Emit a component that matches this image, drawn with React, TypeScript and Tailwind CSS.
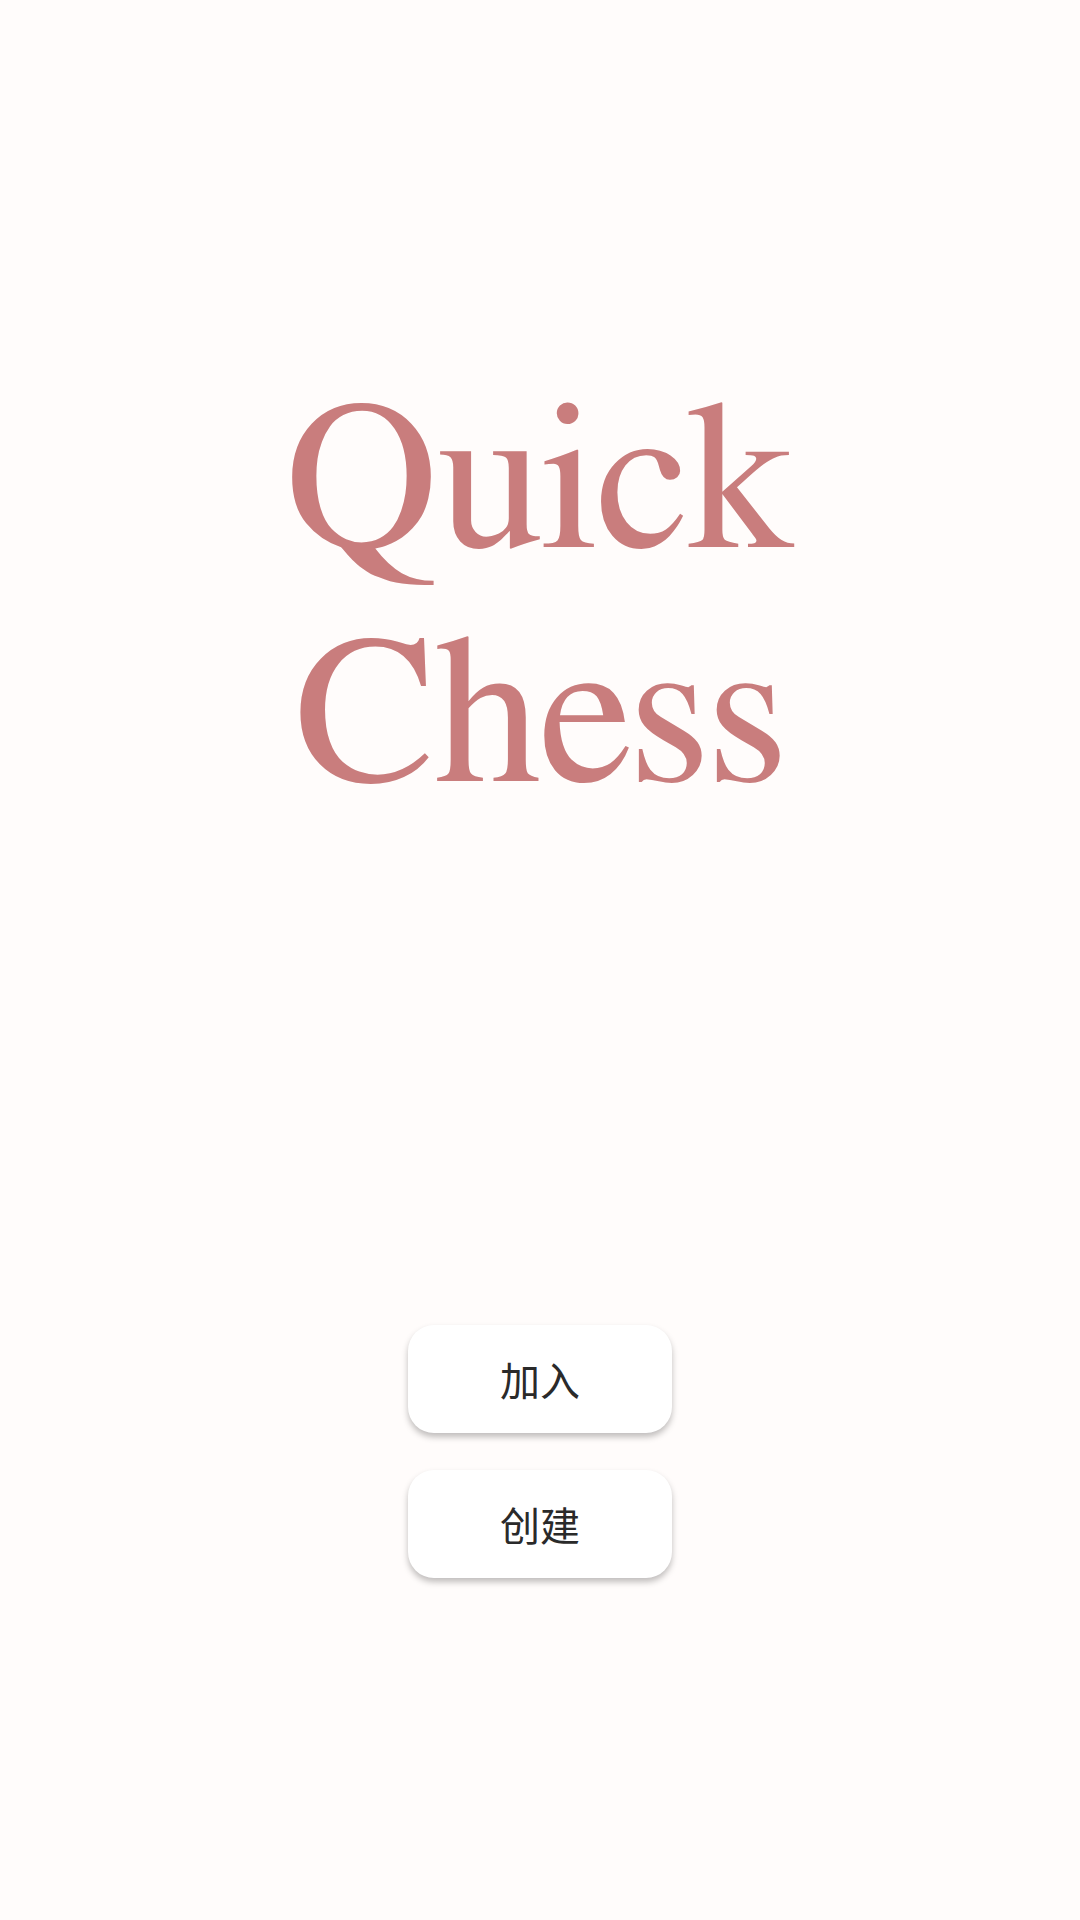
export default function App() {
  return (
    <div className="min-h-[1920px] w-full bg-[#fffcfb] flex flex-col items-center pt-[366px]">
      <h1 className="text-center text-[#c97d7d] text-[212px] leading-[234px] font-normal font-['FreeSerif','Liberation_Serif','Times_New_Roman',serif]">
        <div>Quick</div>
        <div>Chess</div>
      </h1>
      <div className="mt-[491px] flex flex-col items-center gap-[37px]">
        {["加入", "创建"].map((t) => (
          <button
            key={t}
            className="w-[264px] h-[108px] rounded-[26px] bg-white text-[#2a2a2a] text-[40px] flex items-center justify-center shadow-[0_4px_6px_rgba(0,0,0,0.25)] font-['Noto_Sans_CJK_SC','Noto_Sans',sans-serif]"
          >
            {t}
          </button>
        ))}
      </div>
    </div>
  );
}
